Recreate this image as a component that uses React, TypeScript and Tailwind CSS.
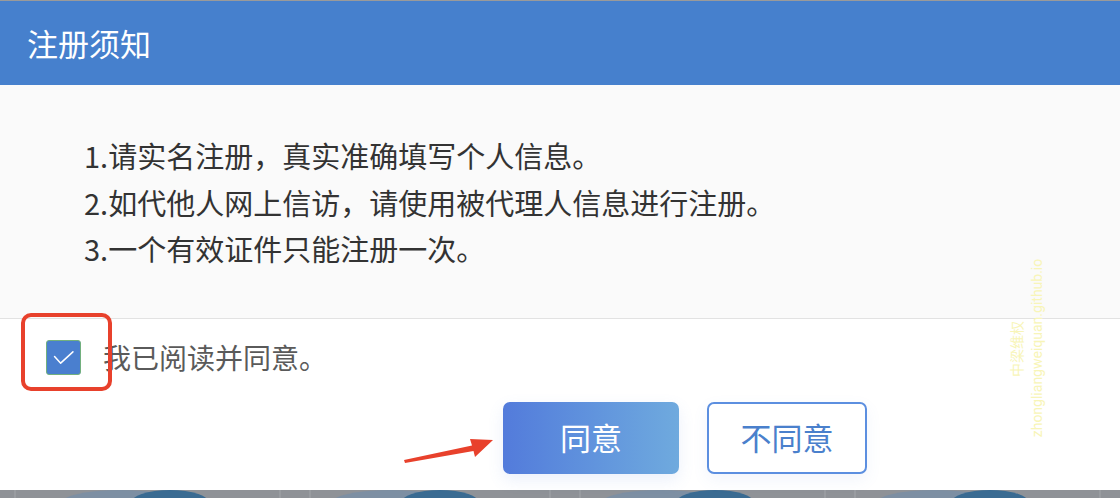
import React, { useState } from 'react'

const font = { fontFamily: '"Noto Sans CJK SC", "Noto Sans", sans-serif' }

// 页面背景底纹（弹窗下方露出的一小条）
const BackdropStrip = () => (
  <svg className="block h-[8px] w-full" viewBox="0 0 1120 8" preserveAspectRatio="none">
    <rect width="1120" height="8" fill="#8f9297" />
    <ellipse cx="120" cy="14" rx="60" ry="14" fill="#7d8fa3" />
    <ellipse cx="170" cy="14" rx="40" ry="14" fill="#3a6b92" />
    <ellipse cx="390" cy="14" rx="60" ry="14" fill="#7d8fa3" />
    <ellipse cx="440" cy="14" rx="40" ry="14" fill="#3a6b92" />
    <ellipse cx="660" cy="14" rx="60" ry="14" fill="#7d8fa3" />
    <ellipse cx="715" cy="14" rx="40" ry="14" fill="#3a6b92" />
    <ellipse cx="935" cy="14" rx="60" ry="14" fill="#7d8fa3" />
    <ellipse cx="990" cy="14" rx="40" ry="14" fill="#3a6b92" />
    <line x1="15" y1="0" x2="15" y2="8" stroke="#a3a6aa" />
    <line x1="280" y1="0" x2="280" y2="8" stroke="#a3a6aa" />
    <line x1="310" y1="0" x2="310" y2="8" stroke="#a3a6aa" />
    <line x1="550" y1="0" x2="550" y2="8" stroke="#a3a6aa" />
    <line x1="580" y1="0" x2="580" y2="8" stroke="#a3a6aa" />
    <line x1="825" y1="0" x2="825" y2="8" stroke="#a3a6aa" />
    <line x1="855" y1="0" x2="855" y2="8" stroke="#a3a6aa" />
    <line x1="1100" y1="0" x2="1100" y2="8" stroke="#a3a6aa" />
  </svg>
)

const App: React.FC = () => {
  const [checked, setChecked] = useState(true)

  const rules = [
    '1.请实名注册，真实准确填写个人信息。',
    '2.如代他人网上信访，请使用被代理人信息进行注册。',
    '3.一个有效证件只能注册一次。',
  ]

  return (
    <div className="relative flex h-[498px] w-full flex-col overflow-hidden bg-white" style={font}>
      {/* 顶部标题 */}
      <div className="h-px bg-[#9a9a9a]" />
      <div className="flex h-[84px] items-center bg-[#4680cd] pl-[27px] text-[31px] text-white">
        注册须知
      </div>

      {/* 须知内容 */}
      <div className="flex flex-col bg-[#fafafa] pb-[46px] pl-[84px] pt-[47px] text-[29px] leading-[46.5px] text-[#333]">
        {rules.map((r) => (
          <span key={r}>{r}</span>
        ))}
      </div>

      {/* 底部操作 */}
      <div className="relative flex flex-1 flex-col border-t border-[#e2e2e2] pt-[21px]">
        <label className="flex cursor-pointer items-center pl-[46px]">
          <span
            className="flex h-[35px] w-[35px] items-center justify-center rounded-[3px] border border-[#72b07e] bg-[#4a7fcf]"
            onClick={() => setChecked(!checked)}
          >
            {checked && (
              <svg width="35" height="35" viewBox="0 0 35 35" fill="none">
                <path d="M8 16.5 L14.5 23.5 L27.5 11.5" stroke="white" strokeWidth="1.6" strokeLinecap="round" strokeLinejoin="round" />
              </svg>
            )}
          </span>
          <span className="ml-[22px] text-[28px] leading-[35px] text-[#5a5a5a]">我已阅读并同意。</span>
        </label>

        <div className="ml-[503px] mt-[27px] flex gap-[28px]">
          <button className="h-[72px] w-[176px] rounded-[7px] bg-gradient-to-r from-[#537bdb] to-[#6faade] text-[31px] text-white shadow-[0_6px_16px_rgba(90,130,220,0.12)]">
            同意
          </button>
          <button className="h-[72px] w-[160px] rounded-[7px] border-2 border-[#5c8fe0] bg-white text-[31px] text-[#4a80cc] shadow-[0_6px_16px_rgba(90,130,220,0.08)]">
            不同意
          </button>
        </div>

        {/* 红框标注 */}
        <div className="pointer-events-none absolute left-[21px] top-[-6px] h-[78px] w-[91px] rounded-[10px] border-4 border-[#e8412c]" />

        {/* 红色箭头 */}
        <svg className="pointer-events-none absolute left-[400px] top-[108px]" width="100" height="36" viewBox="0 0 100 36">
          <path d="M4 33 L72 18.5 L70 12 L93 13 L75 30 L73.5 24 L5 36 Z" fill="#e8412c" />
        </svg>
      </div>

      <BackdropStrip />

      {/* 水印 */}
      <div className="pointer-events-none absolute left-[1037px] top-[348px] -translate-x-1/2 -translate-y-1/2 -rotate-90 whitespace-nowrap text-[14px] text-[#f8f5b8]" style={{ fontFamily: 'Roboto, "Noto Sans", sans-serif' }}>
        zhongliangweiquan.github.io
      </div>
      <div className="pointer-events-none absolute left-[1016px] top-[349px] -translate-x-1/2 -translate-y-1/2 -rotate-90 whitespace-nowrap text-[14px] text-[#f8f5b8]">
        中梁维权
      </div>
    </div>
  )
}

export default App
